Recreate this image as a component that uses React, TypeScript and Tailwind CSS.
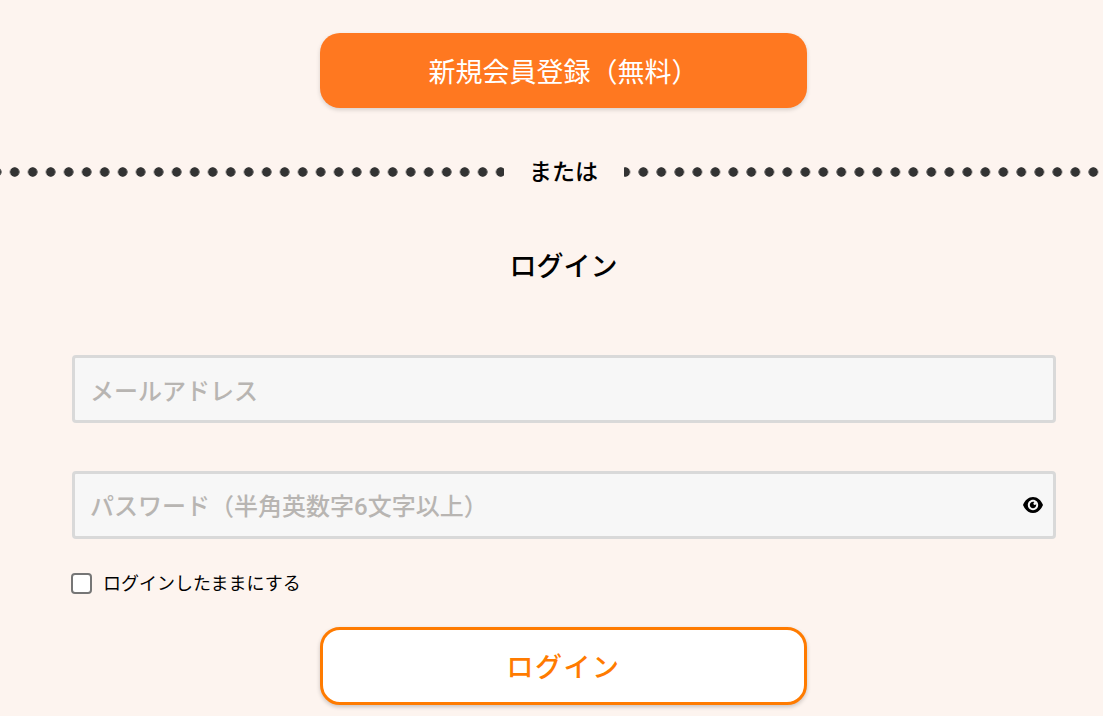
import React from 'react';

const font = "font-['Roboto','Noto_Sans_CJK_JP',sans-serif]";

function EyeIcon() {
  return (
    <svg viewBox="0 0 20 16" className="w-5 h-4 fill-black">
      <path fillRule="evenodd" d="M10 0C5.6 0 1.9 3.2 0 8c1.9 4.8 5.6 8 10 8s8.1-3.2 10-8c-1.900-4.800-5.600-8-10-8zm0 13.200c-2.900 0-5.200-2.300-5.200-5.200S7.100 2.800 10 2.800s5.200 2.300 5.200 5.200-2.300 5.200-5.200 5.200z" />
      <path fillRule="evenodd" d="M10 4.800c-1.800 0-3.200 1.400-3.200 3.200s1.400 3.200 3.200 3.200 3.200-1.400 3.200-3.200c0-.3 0-.6-.1-.9-.2.500-.7.900-1.300.9-.8 0-1.400-.6-1.400-1.400 0-.6.400-1.100.9-1.300-.1-.3-.1-.5-.3-.5z" />
    </svg>
  );
}

function App() {
  return (
    <div className={`h-[716px] overflow-hidden bg-[#fdf4ef] ${font}`}>
      <div className="w-[1127px]">
        <div className="pt-[33px] flex justify-center">
          <button className="w-[487px] h-[75px] pt-[5px] rounded-[20px] bg-[#ff7820] text-white text-[27px] shadow-[0_2px_4px_rgba(0,0,0,0.15)]">
            新規会員登録（無料）
          </button>
        </div>

        <div className="mt-[55px] flex items-center h-[18px]">
          <div className="flex-1 h-[10px] bg-[radial-gradient(circle,#333333_4.4px,transparent_5px)] bg-[length:18px_10px] bg-[position:5.7px_0]" />
          <span className="w-[120px] pt-[2px] text-center text-[23px] font-medium text-black">または</span>
          <div className="flex-1 h-[10px] bg-[radial-gradient(circle,#333333_4.4px,transparent_5px)] bg-[length:18px_10px] bg-[position:-7.7px_0]" />
        </div>

        <h2 className="mt-[68px] text-center text-[27px] leading-[36px] font-medium text-black">ログイン</h2>

        <form className="mt-[70px] px-[72px]">
          <input
            type="text"
            placeholder="メールアドレス"
            className="block w-[984px] h-[68px] pl-[15px] pr-[16px] pt-[5px] bg-[#f7f7f7] border-[3px] border-[#d9d9d9] rounded-[4px] text-[24px] font-medium placeholder:text-[#b8b5b2] outline-none"
          />
          <div className="relative mt-[48px] w-[984px]">
            <input
              type="password"
              placeholder="パスワード（半角英数字6文字以上）"
              className="block w-full h-[68px] pl-[15px] pr-[16px] pt-[3px] bg-[#f7f7f7] border-[3px] border-[#d9d9d9] rounded-[4px] text-[24px] font-medium placeholder:text-[#b8b5b2] outline-none"
            />
            <span className="absolute right-[13px] top-[26px]">
              <EyeIcon />
            </span>
          </div>
          <label className="mt-[34px] -ml-[1px] flex items-center gap-[11px] h-[21px]">
            <span className="w-[21px] h-[21px] rounded-[4px] bg-white border-2 border-[#767676]" />
            <span className="text-[18px] text-black">ログインしたままにする</span>
          </label>
          <div className="mt-[33px] flex justify-center">
            <button
              type="button"
              className="w-[487px] h-[78px] pt-[4px] rounded-[20px] bg-white border-[3px] border-[#ff7b00] text-[#ff7b00] text-[27px] tracking-[1.5px] font-medium shadow-[0_2px_4px_rgba(0,0,0,0.2)]"
            >
              ログイン
            </button>
          </div>
        </form>
      </div>
    </div>
  );
}

export default App;
